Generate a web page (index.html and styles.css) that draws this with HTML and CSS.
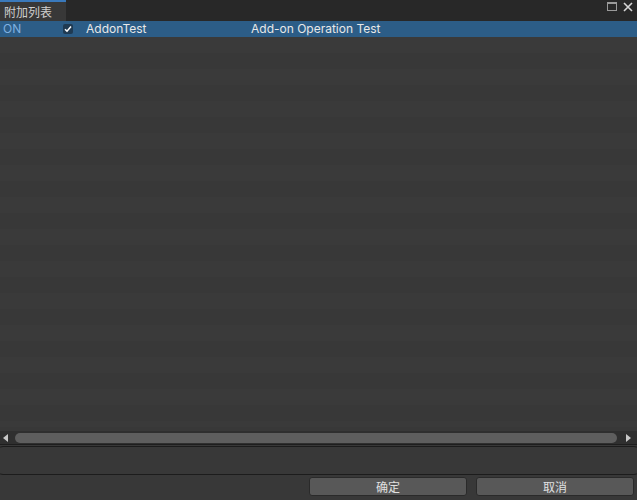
FILE: index.html
```html
<!DOCTYPE html>
<html lang="zh-CN">

<head>
    <meta charset="UTF-8">
    <meta name="viewport" content="width=device-width, initial-scale=1.0">
    <title>附加列表</title>
    <link rel="stylesheet" href="styles.css">
</head>

<body>
    <div class="window">
        <div class="tab_bar">
            <div class="tab">附加列表</div>
            <div class="tab_icons">
                <span class="max_icon"></span>
                <svg class="close_icon" width="10" height="10" viewBox="0 0 10 10">
                    <path d="M1 1L9 9M9 1L1 9" stroke="#d6d6d6" stroke-width="1.6" fill="none" />
                </svg>
            </div>
        </div>
        <div class="list">
            <div class="row selected">
                <span class="col_state">ON</span>
                <span class="col_check">
                    <span class="checkbox">
                        <svg width="8" height="8" viewBox="0 0 8 8">
                            <path d="M1 4.2L3 6.2L7 1.5" stroke="#fff" stroke-width="1.5" fill="none" />
                        </svg>
                    </span>
                </span>
                <span class="col_name">AddonTest</span>
                <span class="col_desc">Add-on Operation Test</span>
            </div>
        </div>
        <div class="hscroll">
            <span class="arrow_left"></span>
            <div class="thumb"></div>
            <span class="arrow_right"></span>
        </div>
        <div class="info_box"></div>
        <div class="buttons">
            <button class="btn">确定</button>
            <button class="btn">取消</button>
        </div>
    </div>
</body>

</html>
```

FILE: styles.css
```css
* {
    margin: 0;
    padding: 0;
    box-sizing: border-box;
}

body {
    width: 637px;
    height: 500px;
    overflow: hidden;
    background-color: #383838;
    font-family: Inter, "Noto Sans CJK SC", sans-serif;
    font-size: 12px;
    color: #d2d2d2;
}

.window {
    display: flex;
    flex-direction: column;
    height: 500px;
}

.tab_bar {
    display: flex;
    justify-content: space-between;
    height: 21px;
    background-color: #282828;
}

.tab {
    width: 66px;
    height: 21px;
    padding: 4px 0 0 4px;
    border-top: 2px solid #3a79bb;
    background-color: #383838;
    font-size: 12px;
    line-height: 14px;
    color: #cfcfcf;
}

.tab_icons {
    display: flex;
    align-items: center;
    gap: 6px;
    padding: 0 4px 8px 0;
}

.max_icon {
    width: 10px;
    height: 9px;
    border: 1px solid #9a9a9a;
    border-top-width: 2px;
}

.list {
    flex: 1;
    background: repeating-linear-gradient(to bottom, #383838 0, #383838 16px, #3a3a3a 16px, #3a3a3a 32px);
}

.row {
    display: flex;
    align-items: center;
    height: 16px;
    line-height: 16px;
}

.row.selected {
    background-color: #2c5d87;
    color: #e8e8e8;
}

.col_state {
    width: 63px;
    padding-left: 3px;
    color: #7fb0e0;
}

.col_check {
    width: 23px;
    display: flex;
    align-items: center;
}

.checkbox {
    display: flex;
    align-items: center;
    justify-content: center;
    width: 10px;
    height: 10px;
    border-radius: 2px;
    background-color: #1f3a52;
}

.col_name {
    width: 165px;
}

.hscroll {
    display: flex;
    align-items: center;
    height: 14px;
    margin-top: 4px;
    background-color: #2f2f2f;
    border-bottom: 1px solid #1e1e1e;
}

.arrow_left {
    width: 15px;
    padding-left: 3px;
    display: flex;
}

.arrow_right {
    width: 20px;
    padding-left: 9px;
    display: flex;
}

.arrow_left::before {
    content: "";
    border-top: 4px solid transparent;
    border-bottom: 4px solid transparent;
    border-right: 5px solid #c8c8c8;
}

.arrow_right::before {
    content: "";
    border-top: 4px solid transparent;
    border-bottom: 4px solid transparent;
    border-left: 5px solid #c8c8c8;
}

.thumb {
    flex: 1;
    height: 10px;
    border-radius: 5px;
    background-color: #5e5e5e;
}

.info_box {
    height: 29px;
    margin: 1px -4px 0 -4px;
    border: 1px solid #1c1c1c;
    border-radius: 7px;
    background-color: #383838;
}

.buttons {
    display: flex;
    justify-content: flex-end;
    gap: 9px;
    padding: 2px 3px 4px 0;
}

.btn {
    width: 158px;
    height: 19px;
    border: 1px solid #2a2a2a;
    border-radius: 3px;
    background-color: #585858;
    color: #e0e0e0;
    font-family: "Noto Sans CJK SC", sans-serif;
    font-size: 12px;
    line-height: 16px;
}
```
